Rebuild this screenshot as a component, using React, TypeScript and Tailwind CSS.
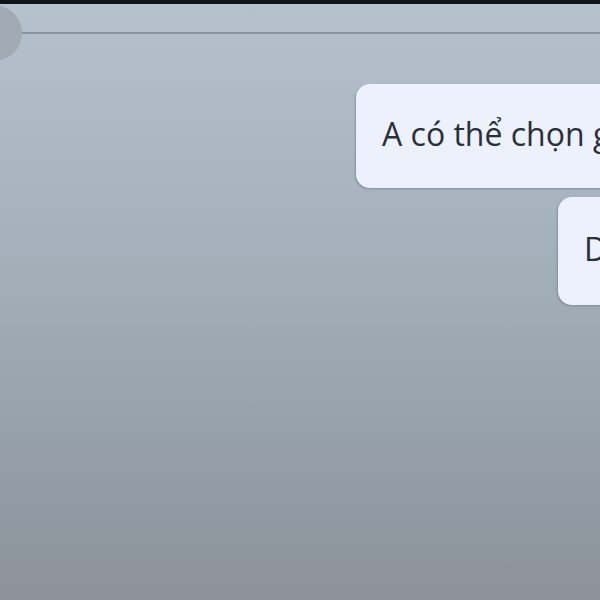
export default function App() {
  return (
    <div className="relative h-[600px] w-[600px] overflow-hidden bg-gradient-to-b from-[#b5c2ce] via-[#a0acb6] to-[#8b929a] font-['Open_Sans','Noto_Sans',sans-serif]">
      <div className="h-[4px] w-full bg-[#111418]" />
      <div className="flex h-[58px] items-center">
        <div className="-ml-[34px] h-[56px] w-[56px] shrink-0 rounded-full bg-[#a1a9b3]" />
        <div className="h-[2px] flex-1 bg-[#8793a0]" />
      </div>
      <div className="flex flex-col pt-[22px]">
        <div className="ml-[356px] flex h-[104px] w-max items-center whitespace-nowrap rounded-[14px] bg-[#edf1fb] pb-[4px] pl-[26px] pr-[26px] text-[32px] text-[#29303a] shadow-[-1px_1px_2px_rgba(70,80,95,0.35)]">
          A có thể chọn giúp em được không ạ
        </div>
        <div className="ml-[558px] mt-[9px] flex h-[108px] w-max items-center whitespace-nowrap rounded-[14px] bg-[#edf1fb] pb-[4px] pl-[26px] pr-[26px] text-[32px] text-[#29303a] shadow-[-1px_1px_2px_rgba(70,80,95,0.35)]">
          Dạ vâng
        </div>
      </div>
    </div>
  );
}
